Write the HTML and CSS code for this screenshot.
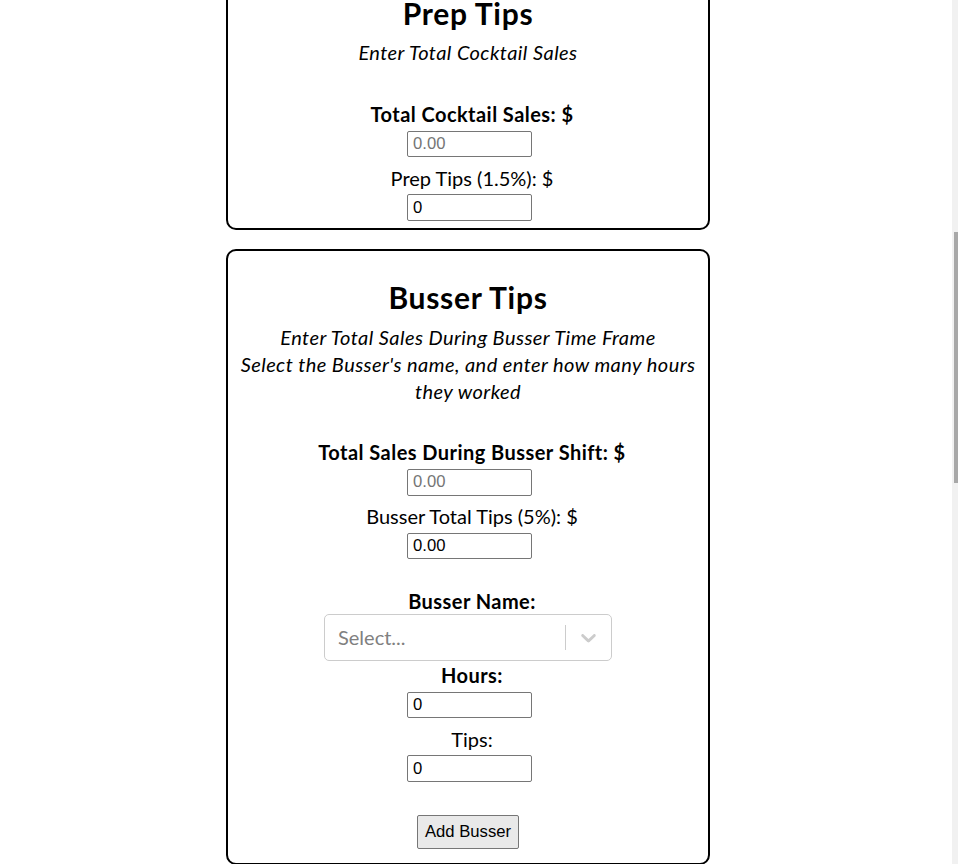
FILE: index.html
```html
<!DOCTYPE html>
<html lang="en">
<head>
<meta charset="utf-8">
<title>Tips</title>
<link rel="stylesheet" href="styles.css">
</head>
<body>
<main class="app">
  <section class="card card-prep">
    <h2 class="card-title">Prep Tips</h2>
    <p class="card-desc">Enter Total Cocktail Sales</p>
    <label class="label label-strong field-first">Total Cocktail Sales: $</label>
    <input class="num-input" type="text" placeholder="0.00">
    <label class="label">Prep Tips (1.5%): $</label>
    <input class="num-input" type="text" value="0">
  </section>

  <section class="card card-busser">
    <h2 class="card-title">Busser Tips</h2>
    <p class="card-desc">Enter Total Sales During Busser Time Frame<br>Select the Busser's name, and enter how many hours they worked</p>
    <label class="label label-strong field-first">Total Sales During Busser Shift: $</label>
    <input class="num-input" type="text" placeholder="0.00">
    <label class="label">Busser Total Tips (5%): $</label>
    <input class="num-input" type="text" value="0.00">

    <label class="label label-strong label-select">Busser Name:</label>
    <div class="select">
      <div class="select-value"><span class="select-placeholder">Select...</span></div>
      <span class="select-sep"></span>
      <div class="select-indicator">
        <svg viewBox="0 0 20 20" width="25" height="25" aria-hidden="true"><path d="M4.516 7.548c0.436-0.446 1.043-0.481 1.576 0l3.908 3.747 3.908-3.747c0.533-0.481 1.141-0.446 1.574 0 0.436 0.445 0.408 1.197 0 1.615-0.406 0.418-4.695 4.502-4.695 4.502-0.217 0.223-0.502 0.335-0.787 0.335s-0.57-0.112-0.789-0.335c0 0-4.287-4.084-4.695-4.502s-0.436-1.170 0-1.615z"/></svg>
      </div>
    </div>
    <label class="label label-strong label-after-select">Hours:</label>
    <input class="num-input" type="text" value="0">
    <label class="label">Tips:</label>
    <input class="num-input" type="text" value="0">
    <button class="btn" type="button">Add Busser</button>
  </section>
</main>

<div class="scroll-track"><div class="scroll-thumb"></div></div>
</body>
</html>
```

FILE: styles.css
```css
html, body {
  margin: 0;
  padding: 0;
  background: #ffffff;
}

body {
  font-family: Lato, "Open Sans", sans-serif;
  font-size: 20px;
  line-height: 26.67px;
  color: #000;
  overflow: hidden;
}

.app {
  width: 936px;
  margin-top: -33.6px;
  display: flex;
  flex-direction: column;
  align-items: center;
}

.card {
  box-sizing: border-box;
  width: 484px;
  border: 2px solid #000;
  border-radius: 10px;
  display: flex;
  flex-direction: column;
  align-items: center;
  text-align: center;
}

.card-prep {
  margin-bottom: 19px;
  padding-bottom: 7.5px;
}

.card-busser {
  padding-bottom: 14px;
}

.card-title {
  margin: 26px 0 0;
  font-size: 30px;
  line-height: 40px;
  font-weight: 700;
  letter-spacing: 0.7px;
}

.card-prep .card-title {
  margin-top: 25px;
}

.card-desc {
  margin: 7px 0 0;
  padding: 0 8px;
  font-style: italic;
  letter-spacing: 0.44px;
}

.card-prep .card-desc {
  margin-top: 6px;
}

.label {
  display: block;
  margin-top: 7.5px;
  padding-left: 8px;
}

.label-strong {
  font-weight: 700;
  letter-spacing: 0.45px;
}

.field-first {
  margin-top: 35px;
}

.label-select {
  margin-top: 28.5px;
}

.label-after-select {
  margin-top: 1px;
}

.num-input {
  box-sizing: border-box;
  width: 125px;
  height: 26.5px;
  margin: 3px 0 0 3px;
  padding: 0 5px;
  border: 1px solid #767676;
  border-radius: 2px;
  font-family: "Liberation Sans", Arial, sans-serif;
  font-size: 16.67px;
  color: #000;
  background: #fff;
  outline: none;
}

.num-input::placeholder {
  color: #757575;
}

.select {
  box-sizing: border-box;
  width: 288px;
  height: 46.5px;
  border: 1px solid #cccccc;
  border-radius: 5px;
  display: flex;
  align-items: stretch;
  background: #fff;
}

.select-value {
  flex: 1;
  display: flex;
  align-items: center;
  padding: 0 10px;
}

.select-placeholder {
  margin-left: 3px;
  color: #808080;
}

.select-sep {
  width: 1px;
  margin: 10px 0;
  background: #cccccc;
}

.select-indicator {
  display: flex;
  align-items: center;
  padding: 0 10px;
}

.select-indicator svg {
  display: block;
  fill: #cccccc;
}

.btn {
  box-sizing: border-box;
  height: 34px;
  margin-top: 33.5px;
  padding: 0 7px;
  border: 1px solid #767676;
  border-radius: 2px;
  background: #e9e9e9;
  font-family: "Liberation Sans", Arial, sans-serif;
  font-size: 16.67px;
  color: #000;
}

.scroll-track {
  position: fixed;
  top: 0;
  right: 0;
  width: 6px;
  height: 100%;
  background: #f1f1f1;
}

.scroll-thumb {
  position: absolute;
  top: 232px;
  right: 0;
  width: 4px;
  height: 251px;
  background: #a8a8a8;
}
```
